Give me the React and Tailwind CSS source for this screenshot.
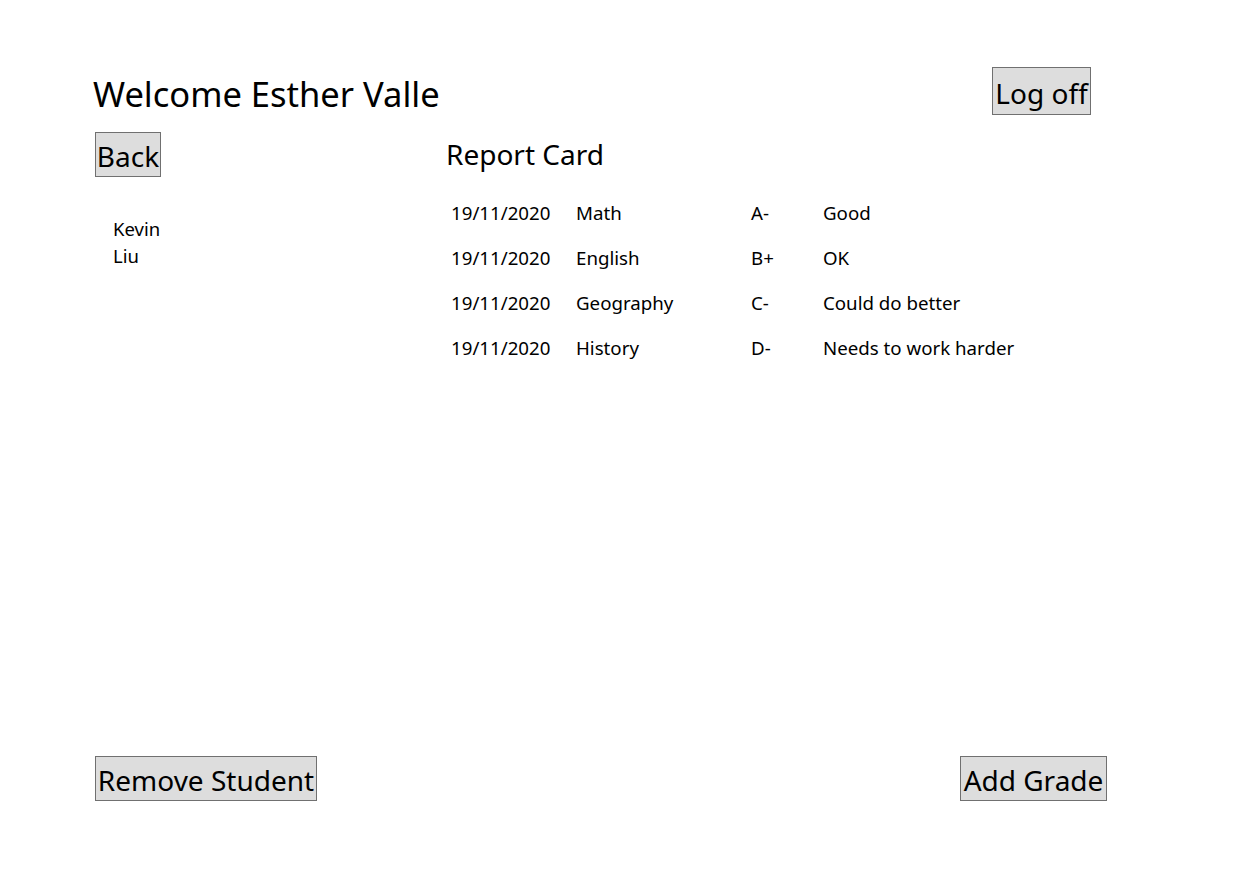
import React from "react";

const rows = [
  ["19/11/2020", "Math", "A-", "Good"],
  ["19/11/2020", "English", "B+", "OK"],
  ["19/11/2020", "Geography", "C-", "Could do better"],
  ["19/11/2020", "History", "D-", "Needs to work harder"],
];

function Btn({ children, className = "" }) {
  return (
    <button
      className={
        "h-[45px] bg-[#dddddd] border border-[#707070] text-black text-[28px] leading-none px-[2px] flex items-center justify-center whitespace-nowrap " +
        className
      }
    >
      {children}
    </button>
  );
}

export default function App() {
  return (
    <div
      className="w-[1260px] h-[881px] bg-white text-black flex flex-col"
      style={{ fontFamily: '"Noto Sans", "Open Sans", sans-serif' }}
    >
      <div className="flex justify-between items-start pl-[93px] pr-[169px] pt-[67px]">
        <h1 className="text-[34.5px] leading-none mt-[10px]">Welcome Esther Valle</h1>
        <Btn className="h-[48px] w-[99px] pt-[3px]">Log off</Btn>
      </div>
      <div className="flex flex-1 pt-[17px]">
        <div className="pl-[95px] w-[446px] shrink-0">
          <Btn className="w-[66px] pt-[2px]">Back</Btn>
          <div className="pl-[18px] pt-[38px] text-[18.5px] leading-[27px]">
            <div>Kevin</div>
            <div>Liu</div>
          </div>
        </div>
        <div>
          <h2 className="text-[28px] leading-none mt-[8px]">Report Card</h2>
          <div className="mt-[22px] pl-[5px] grid grid-cols-[125px_175px_72px_auto] text-[18.7px] leading-[45px]">
            {rows.map((r, i) => (
              <React.Fragment key={i}>
                <div>{r[0]}</div>
                <div>{r[1]}</div>
                <div>{r[2]}</div>
                <div>{r[3]}</div>
              </React.Fragment>
            ))}
          </div>
        </div>
      </div>
      <div className="flex justify-between pl-[95px] pr-[153px] pb-[80px]">
        <Btn className="w-[222px] pt-[2px]">Remove Student</Btn>
        <Btn className="w-[147px] pt-[2px]">Add Grade</Btn>
      </div>
    </div>
  );
}
